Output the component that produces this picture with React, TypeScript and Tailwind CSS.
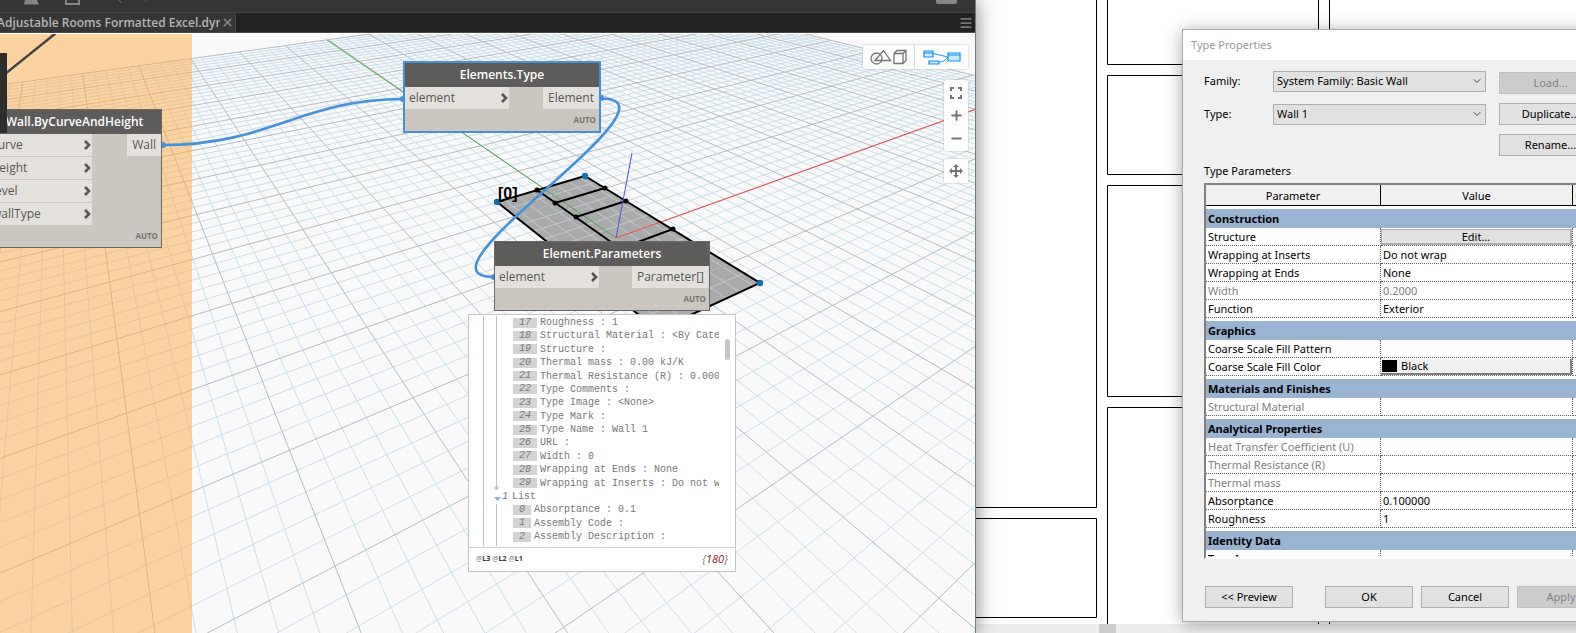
import { ChevronDown, ChevronsUp, Menu, Plus, Minus, X } from 'lucide-react'

type Point = [number, number]

// perspective of the background grid
const ORIGIN: Point = [615.7, 238.3]
const VANISH_X: Point = [1702, -150]
const VANISH_Y: Point = [54, -150]
const A = 0.0621
const B = -0.1047
const SIZE = 10
const NEAR = 0.2

const project = (x: number, y: number): Point => {
  const w = 1 + A * x + B * y
  return [
    (ORIGIN[0] + A * x * VANISH_X[0] + B * y * VANISH_Y[0]) / w,
    (ORIGIN[1] + A * x * VANISH_X[1] + B * y * VANISH_Y[1]) / w,
  ]
}

const segment = (from: Point, to: Point) =>
  `M${from[0].toFixed(1)} ${from[1].toFixed(1)}L${to[0].toFixed(1)} ${to[1].toFixed(1)}`

const gridPaths = () => {
  const major: string[] = []
  const minor: string[] = []
  for (let i = -SIZE * 5; i <= SIZE * 5; i++) {
    const n = i / 5
    const list = i % 5 === 0 ? major : minor
    const startX = Math.max(-SIZE, (NEAR - 1 - B * n) / A)
    const endY = Math.min(SIZE, (NEAR - 1 - A * n) / B)
    if (startX < SIZE) list.push(segment(project(startX, n), project(SIZE, n)))
    if (endY > -SIZE) list.push(segment(project(n, -SIZE), project(n, endY)))
  }
  return { major: major.join(''), minor: minor.join('') }
}

const grid = gridPaths()

const innerPoints: Point[] = [
  [537, 190],
  [605, 188],
  [555, 203],
  [626, 201],
  [576, 217],
  [673, 229],
]

const cornerPoints: Point[] = [
  [585, 176],
  [497, 202],
  [760, 283],
]

const previewRows = [
  { index: 17, text: 'Roughness : 1' },
  { index: 18, text: 'Structural Material : <By Category>' },
  { index: 19, text: 'Structure :' },
  { index: 20, text: 'Thermal mass : 0.00 kJ/K' },
  { index: 21, text: 'Thermal Resistance (R) : 0.0000 (m²·K)/W' },
  { index: 22, text: 'Type Comments :' },
  { index: 23, text: 'Type Image : <None>' },
  { index: 24, text: 'Type Mark :' },
  { index: 25, text: 'Type Name : Wall 1' },
  { index: 26, text: 'URL :' },
  { index: 27, text: 'Width : 0' },
  { index: 28, text: 'Wrapping at Ends : None' },
  { index: 29, text: 'Wrapping at Inserts : Do not wrap' },
]

const nextRows = [
  { index: 0, text: 'Absorptance : 0.1' },
  { index: 1, text: 'Assembly Code :' },
  { index: 2, text: 'Assembly Description :' },
]

type Row = { name: string; value?: string; kind?: 'edit' | 'color'; disabled?: boolean }

const groups: { title: string; rows: Row[] }[] = [
  {
    title: 'Construction',
    rows: [
      { name: 'Structure', value: 'Edit...', kind: 'edit' },
      { name: 'Wrapping at Inserts', value: 'Do not wrap' },
      { name: 'Wrapping at Ends', value: 'None' },
      { name: 'Width', value: '0.2000', disabled: true },
      { name: 'Function', value: 'Exterior' },
    ],
  },
  {
    title: 'Graphics',
    rows: [
      { name: 'Coarse Scale Fill Pattern' },
      { name: 'Coarse Scale Fill Color', value: 'Black', kind: 'color' },
    ],
  },
  {
    title: 'Materials and Finishes',
    rows: [{ name: 'Structural Material', disabled: true }],
  },
  {
    title: 'Analytical Properties',
    rows: [
      { name: 'Heat Transfer Coefficient (U)', disabled: true },
      { name: 'Thermal Resistance (R)', disabled: true },
      { name: 'Thermal mass', disabled: true },
      { name: 'Absorptance', value: '0.100000' },
      { name: 'Roughness', value: '1' },
    ],
  },
  {
    title: 'Identity Data',
    rows: [{ name: 'Type Image' }],
  },
]

const Scene = () => (
  <svg className="absolute inset-0 size-full" aria-hidden="true">
    <g transform="translate(0 -34)" fill="none">
      <path d="M585 176L497 202L658 330L760 283Z" fill="#ababab" />
      <path d={grid.minor} stroke="#cbdfeb" />
      <path d={grid.major} stroke="#b2bdc5" />
      <path d="M585 176L497 202L658 330L760 283Z" fill="#ababab" fillOpacity=".4" />
      <path d="M616 238L327 40" stroke="#4ba64b" />
      <path d="M616 238L976 109" stroke="#f24a4a" />
      <g stroke="#000" strokeWidth="2">
        <path d="M585 176L497 202L658 330L760 283Z" />
        <path d="M537 190L658 275M555 203L605 188M576 217L626 201M630 245L673 229" />
      </g>
      {innerPoints.map(([x, y]) => (
        <circle key={`${x}-${y}`} cx={x} cy={y} r="2.5" fill="#000" />
      ))}
      {cornerPoints.map(([x, y]) => (
        <circle key={`${x}-${y}`} cx={x} cy={y} r="3.2" fill="#0f6fb0" />
      ))}
      <path d="M616 238L632 153" stroke="#5050e0" />
      <rect x="0" y="34" width="192" height="2000" fill="#ffad47" fillOpacity=".5" />
      <path d="M0 78L56 33" stroke="#444" strokeWidth="2.5" />
    </g>
  </svg>
)

const Wires = () => (
  <svg className="absolute inset-0 size-full" aria-hidden="true">
    <g transform="translate(0 -34)" fill="none" stroke="#4392db" strokeWidth="2.6">
      <path d="M162 145C272 145 300 99 404 99" />
      <path d="M601 98.500C693 98.500 402 277 494 277" />
      <g fill="#4392db" stroke="none">
        <circle cx="163" cy="145" r="3" />
        <circle cx="403" cy="99" r="3" />
        <circle cx="601" cy="98" r="3" />
        <circle cx="494" cy="277" r="3" />
      </g>
    </g>
  </svg>
)

type NodeProps = {
  title: string
  inputs: string[]
  output: string
  place: string
  frame?: string
}

const GraphNode = ({ title, inputs, output, place, frame = 'border border-[#6b6864]' }: NodeProps) => (
  <article className={`absolute bg-[#cbc6bf] text-[#555] ${frame} ${place}`}>
    <h2 className="flex h-6 items-center justify-center bg-[#5e5c5a] text-[12px] font-semibold text-white">{title}</h2>
    <div className="flex items-start justify-between">
      <ul className="flex w-[104px] flex-col gap-px text-[12px]">
        {inputs.map((input) => (
          <li key={input} className="flex h-[22px] items-center justify-between bg-[#e4e1dc] pr-px pl-1">
            {input}
            <svg width="7" height="10" fill="none" stroke="currentColor" strokeWidth="2.600" aria-hidden="true">
              <path d="M1 1L5 5L1 9" />
            </svg>
          </li>
        ))}
      </ul>
      <span className="flex h-[22px] items-center bg-[#e4e1dc] px-[5px] text-[12px]">{output}</span>
    </div>
    <span className="flex h-[22px] items-center justify-end pr-[3px] text-[8px] font-bold text-[#77736f]">AUTO</span>
  </article>
)

const PreviewLine = ({ index, text, badge }: { index: number; text: string; badge: string }) => (
  <li className="flex h-[13px] items-center gap-[3px] pl-[44px]">
    <span className={`h-[10px] shrink-0 bg-[#d3d3d3] text-center leading-[10px] italic ${badge}`}>{index}</span>
    <span className="whitespace-nowrap">{text}</span>
  </li>
)

const Preview = () => (
  <section className="absolute top-[280px] left-[468px] flex h-[258px] w-[268px] flex-col border border-[#c4c4c4] bg-white">
    <div className="relative flex h-[232px] pt-px">
      <svg className="absolute top-0 left-0 h-[232px] w-10" fill="#c0c0c0" aria-hidden="true">
        <rect x="14" y="1" width="1" height="230" />
        <rect x="27" y="1" width="1" height="172" />
        <circle cx="27.500" cy="173" r="2" />
        <path d="M25 182h7l-3.500 4z" fill="#7fb2de" />
        <rect x="27" y="189" width="1" height="42" />
      </svg>
      <ul className="flex h-[227px] w-[250px] flex-col justify-between overflow-hidden font-['Liberation_Mono',monospace] text-[10px] text-[#777]">
        {previewRows.map((row) => (
          <PreviewLine key={row.index} {...row} badge="w-6" />
        ))}
        <li className="flex h-[13px] items-center gap-1 pl-[33px]">
          <em>1</em>
          <span>List</span>
        </li>
        {nextRows.map((row) => (
          <PreviewLine key={row.index} {...row} badge="w-[18px]" />
        ))}
      </ul>
      <span className="absolute top-6 right-[5px] h-[21px] w-[5px] rounded-full bg-[#c4c4c4]" />
    </div>
    <footer className="flex grow items-center justify-between border-t border-[#d0d0d0] px-[7px]">
      <p className="flex gap-[2px] text-[7px] text-[#777]">
        {['L3', 'L2', 'L1'].map((level) => (
          <span key={level}>
            @<b className="text-[#333]">{level}</b>
          </span>
        ))}
      </p>
      <em className="text-[11px] text-[#777]">
        {'{'}
        <span className="text-[#8b1a1a]">180</span>
        {'}'}
      </em>
    </footer>
  </section>
)

const ViewControls = () => (
  <div className="absolute top-[11px] right-[7px] flex flex-col items-end text-[#757575]">
    <div className="flex h-[24px] divide-x divide-[#ddd] rounded-xs bg-white/90 shadow-[0_0_2px_#aaa]">
      <button aria-label="3D preview" className="flex w-[52px] items-center justify-center">
        <svg width="37" height="16" fill="none" stroke="currentColor" strokeWidth="1.300">
          <circle cx="6.500" cy="9.500" r="5.500" />
          <path d="M5 11.500L13.500 1.500L20.500 11.500Z" />
          <path d="M24 4.500h9v10h-9zM24 4.500l3-3h9v10l-3 3M33 4.500l3-3" />
        </svg>
      </button>
      <button aria-label="Graph view" className="flex w-[53px] items-center justify-center">
        <svg width="38" height="16" fill="#cde7fb" stroke="#0a8ff0" strokeWidth="1.200">
          <path d="M10 4.500L25 8M17 13L21 12L25 8" fill="none" strokeWidth=".9" />
          <path d="M1 2h9v6H1zM1 4h9M6 12h10v3H6zM25 4h12v8H25zM25 6h12" />
        </svg>
      </button>
    </div>
    <div className="mt-[11px] flex w-6 flex-col rounded-xs bg-white/90 py-px shadow-[0_0_2px_#aaa]">
      <button aria-label="Fit view" className="flex h-[23px] items-center justify-center">
        <svg width="12" height="12" fill="none" stroke="currentColor" strokeWidth="2">
          <path d="M1 4V1h3M8 1h3v3M11 8v3H8M4 11H1V8" />
        </svg>
      </button>
      <button aria-label="Zoom in" className="flex h-[23px] items-center justify-center">
        <Plus size={15} strokeWidth={3} />
      </button>
      <button aria-label="Zoom out" className="flex h-[23px] items-center justify-center">
        <Minus size={15} strokeWidth={3} />
      </button>
    </div>
    <button aria-label="Pan" className="mt-2 flex size-6 items-center justify-center rounded-xs bg-white/90 shadow-[0_0_2px_#aaa]">
      <svg width="14" height="14" fill="currentColor">
        <path d="M7 0l3 3H8v3h3V4l3 3-3 3V8H8v3h2l-3 3-3-3h2V8H3v2L0 7l3-3v2h3V3H4z" />
      </svg>
    </button>
  </div>
)

const Dynamo = () => (
  <main className="relative z-10 flex min-w-0 flex-col border-r border-[#6b8278] bg-[#f9f9f9] font-['Open_Sans',sans-serif] shadow-[0_0_20px_rgba(0,0,0,0.5)]">
    <div className="flex h-[13px] shrink-0 items-start justify-between border-b border-[#454545] bg-[#363636] pr-[18px] pl-6">
      <svg width="130" height="5" fill="#858585" aria-hidden="true">
        <path d="M1 0h12l2 4.500H0z" />
        <path d="M41 0h2v3h11V0h2v5H41z" />
        <path d="M95 0l3 2-1 1-3-3zM122 0l-1 2v-2z" opacity=".6" />
      </svg>
      <span className="h-1 w-[21px] rounded-b-xs bg-[#858585]" />
    </div>
    <nav className="flex h-5 shrink-0 items-stretch justify-between border-b border-[#4a4a4a] bg-[#232323]">
      <div className="flex items-center gap-px border-r border-[#454545] bg-[#363636] pr-px">
        <a href="#workspace" className="w-[220px] overflow-hidden whitespace-nowrap text-[12px] font-semibold text-[#b5b5b5]">
          <span className="-ml-[3px]">Adjustable Rooms Formatted Excel.dyn</span>
        </a>
        <button aria-label="Close tab" className="text-[#858585]">
          <X size={13} strokeWidth={3} />
        </button>
      </div>
      <button aria-label="Tabs menu" className="pr-[2px] text-[#757575]">
        <Menu size={14} strokeWidth={3} />
      </button>
    </nav>
    <div className="relative grow overflow-hidden border-t border-white">
      <Scene />
      <span className="absolute top-[148px] left-[498px] font-['Liberation_Sans',sans-serif] text-base font-bold text-black">[0]</span>
      <Wires />
      <GraphNode
        title="Wall.ByCurveAndHeight"
        inputs={['curve', 'height', 'level', 'wallType']}
        output="Wall"
        place="top-[75px] -left-[13px] h-[139px] w-[175px]"
      />
      <GraphNode
        title="Elements.Type"
        inputs={['element']}
        output="Element"
        place="top-[27px] left-[403px] w-[198px]"
        frame="border-2 border-[#4392db]"
      />
      <GraphNode title="Element.Parameters" inputs={['element']} output="Parameter[]" place="top-[207px] left-[494px] w-[216px]" />
      <Preview />
      <span className="absolute top-[19px] left-0 h-20 w-[7px] bg-[#2d2d2d]" />
      <ViewControls />
    </div>
  </main>
)

const FloorPlan = () => (
  <aside className="flex min-w-0 flex-col bg-white">
    <svg className="w-full grow" fill="none" stroke="#000" aria-hidden="true">
      <path d="M-1 507.500H120.500V-1M-1 518.500H120.500V617.500H-1" />
      <path d="M131.500 -1V64.500H342.500V-1M131.500 75.500H342.500V174.500H131.500ZM131.500 185.500H342.500V396.500H131.500ZM131.500 630V407.500H342.500V630" />
      <path d="M353.500 -1V630" />
    </svg>
    <div className="h-[9px] shrink-0 bg-[#eee] pl-[123px]">
      <div className="h-full w-[17px] bg-[#cdcdcd]" />
    </div>
  </aside>
)

const Picker = ({ id, label, value }: { id: string; label: string; value: string }) => (
  <div className="flex h-[21px] items-center">
    <label htmlFor={id} className="w-[69px]">
      {label}
    </label>
    <div className="relative h-full w-[213px]">
      <select id={id} className="size-full appearance-none border border-[#adadad] bg-[#e1e1e1] pl-[3px]">
        <option>{value}</option>
      </select>
      <ChevronDown size={12} className="pointer-events-none absolute top-1 right-[3px] text-[#444]" />
    </div>
  </div>
)

const Button = ({ children, size, disabled = false }: { children: string; size: string; disabled?: boolean }) => (
  <button
    disabled={disabled}
    className={`h-[22px] shrink-0 border border-[#adadad] bg-[#e1e1e1] disabled:border-[#bfbfbf] disabled:bg-[#ccc] disabled:text-[#838383] ${size}`}
  >
    {children}
  </button>
)

const ValueCell = ({ row }: { row: Row }) => {
  if (row.kind === 'edit') {
    return (
      <button className="block h-4 w-full border border-r-2 border-b-2 border-[#adadad] bg-[#e1e1e1] leading-[13px]">{row.value}</button>
    )
  }
  if (row.kind === 'color') {
    return (
      <button className="flex h-4 w-full items-center gap-1 border-r-2 border-b-2 border-[#808080] bg-[#efefef] pl-px leading-[13px]">
        <span className="h-3 w-[15px] bg-black" />
        {row.value}
      </button>
    )
  }
  return <span className="pl-[2px]">{row.value}</span>
}

const ParameterTable = () => (
  <div className="h-[376px] overflow-hidden border-2 border-[#808080] border-r-white border-b-white bg-white">
    <table className="w-full table-fixed border-separate border-spacing-0 text-left text-[11px] leading-[17px]">
      <colgroup>
        <col className="w-[175px]" />
        <col className="w-[192px]" />
        <col />
      </colgroup>
      <thead className="bg-[#f0f0f0] text-center">
        <tr className="h-[21px]">
          <th className="border-r border-b border-black p-0 font-normal">Parameter</th>
          <th className="border-r border-b border-black p-0 font-normal">Value</th>
          <th className="border-b border-black p-0 pl-[2px] text-left font-normal text-[#e0b070]">=</th>
        </tr>
      </thead>
      {groups.map((group) => (
        <tbody key={group.title}>
          <tr className="h-[3px]">
            <td colSpan={3} className="p-0" />
          </tr>
          <tr className="h-[19px] bg-[#99b4d1]">
            <th colSpan={2} className="p-0 pl-[2px] font-bold">
              {group.title}
            </th>
            <td className="p-0">
              <ChevronsUp size={12} />
            </td>
          </tr>
          {group.rows.map((row) => (
            <tr key={row.name} className={row.disabled ? 'h-[18px] text-[#808080]' : 'h-[18px]'}>
              <td className="border-r border-b border-dotted border-[#666] p-0 pl-[2px]">{row.name}</td>
              <td className="border-r border-b border-dotted border-[#666] p-0">
                <ValueCell row={row} />
              </td>
              <td className="border-b border-dotted border-[#666] p-0" />
            </tr>
          ))}
        </tbody>
      ))}
    </table>
  </div>
)

const TypeProperties = () => (
  <section
    aria-label="Type Properties"
    className="absolute top-[29px] left-3/4 z-20 flex h-[593px] w-[434px] flex-col border border-[#aaa] bg-[#f0f0f0] font-['Noto_Sans',sans-serif] text-[11px] text-black shadow-[0_2px_16px_rgba(0,0,0,0.35)]"
  >
    <h1 className="flex h-[30px] shrink-0 items-center bg-white pl-2 text-[11px] text-[#999]">Type Properties</h1>
    <div className="flex flex-col px-[21px]">
      <div className="flex items-start gap-[13px] pt-[11px]">
        <div className="flex flex-col gap-3">
          <Picker id="family" label="Family:" value="System Family: Basic Wall" />
          <Picker id="type" label="Type:" value="Wall 1" />
        </div>
        <div className="flex flex-col gap-[9px] pt-px">
          <Button size="w-[103px]" disabled>
            Load...
          </Button>
          <Button size="w-[103px]">Duplicate...</Button>
          <Button size="w-[103px]">Rename...</Button>
        </div>
      </div>
      <h2 className="pt-[7px] pb-1 leading-4">Type Parameters</h2>
      <ParameterTable />
      <div className="flex gap-2 pt-[27px] pl-px">
        <Button size="w-[88px] mr-6">{'<< Preview'}</Button>
        <Button size="w-[88px]">OK</Button>
        <Button size="w-[88px]">Cancel</Button>
        <Button size="w-[88px]" disabled>
          Apply
        </Button>
      </div>
    </div>
  </section>
)

export default function App() {
  return (
    <div className="relative grid h-screen grid-cols-[976fr_600fr] overflow-hidden">
      <Dynamo />
      <FloorPlan />
      <TypeProperties />
    </div>
  )
}
